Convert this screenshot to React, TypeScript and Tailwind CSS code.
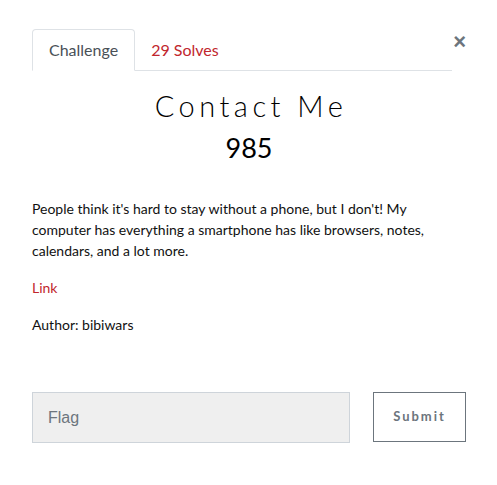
import React from "react";

export default function App() {
  return (
    <div className="w-[497px] h-[485px] bg-white pl-[32px] pr-[31px] pt-[29px] font-['Lato',sans-serif]">
      <div className="flex items-start">
        <div className="flex w-[420px] border-b border-[#dee2e6]">
          <div className="h-[42px] -mb-px px-[16px] flex items-center border border-[#dee2e6] border-b-white rounded-t-[4px] text-[16px] text-[#495057] bg-white">
            Challenge
          </div>
          <div className="h-[41px] px-[16px] flex items-center text-[16px] text-[#c1262d]">
            29 Solves
          </div>
        </div>
        <button className="ml-auto mt-[2px] text-[22px] leading-none font-bold text-[#6c757d] font-['Liberation_Sans',sans-serif]">
          ×
        </button>
      </div>

      <div className="mt-[16px] text-center">
        <h2 className="text-[29px] leading-[38px] font-light tracking-[4.5px] text-[#000] pl-[4px]">
          Contact Me
        </h2>
        <h3 className="mt-[7px] text-[27px] leading-[32px] text-black">985</h3>
      </div>

      <div className="mt-[34px] text-[14px] leading-[21px] text-[#111] pr-[8px]">
        <p>
          People think it's hard to stay without a phone, but I don't! My computer has everything a smartphone has like browsers, notes, calendars, and a lot more.
        </p>
        <p className="mt-[16px] text-[#c1262d]">Link</p>
        <p className="mt-[16px]">Author: bibiwars</p>
      </div>

      <div className="mt-[57px] flex items-start gap-[23px]">
        <input
          placeholder="Flag"
          className="w-[318px] h-[51px] bg-[#efefef] border border-[#ced4da] px-[15px] text-[16px] font-['Liberation_Sans',sans-serif] placeholder:text-[#6c757d] outline-none"
        />
        <button className="w-[93px] h-[50px] border border-[#6c757d] text-[13px] font-bold tracking-[2px] text-[#6c757d]">
          Submit
        </button>
      </div>
    </div>
  );
}
